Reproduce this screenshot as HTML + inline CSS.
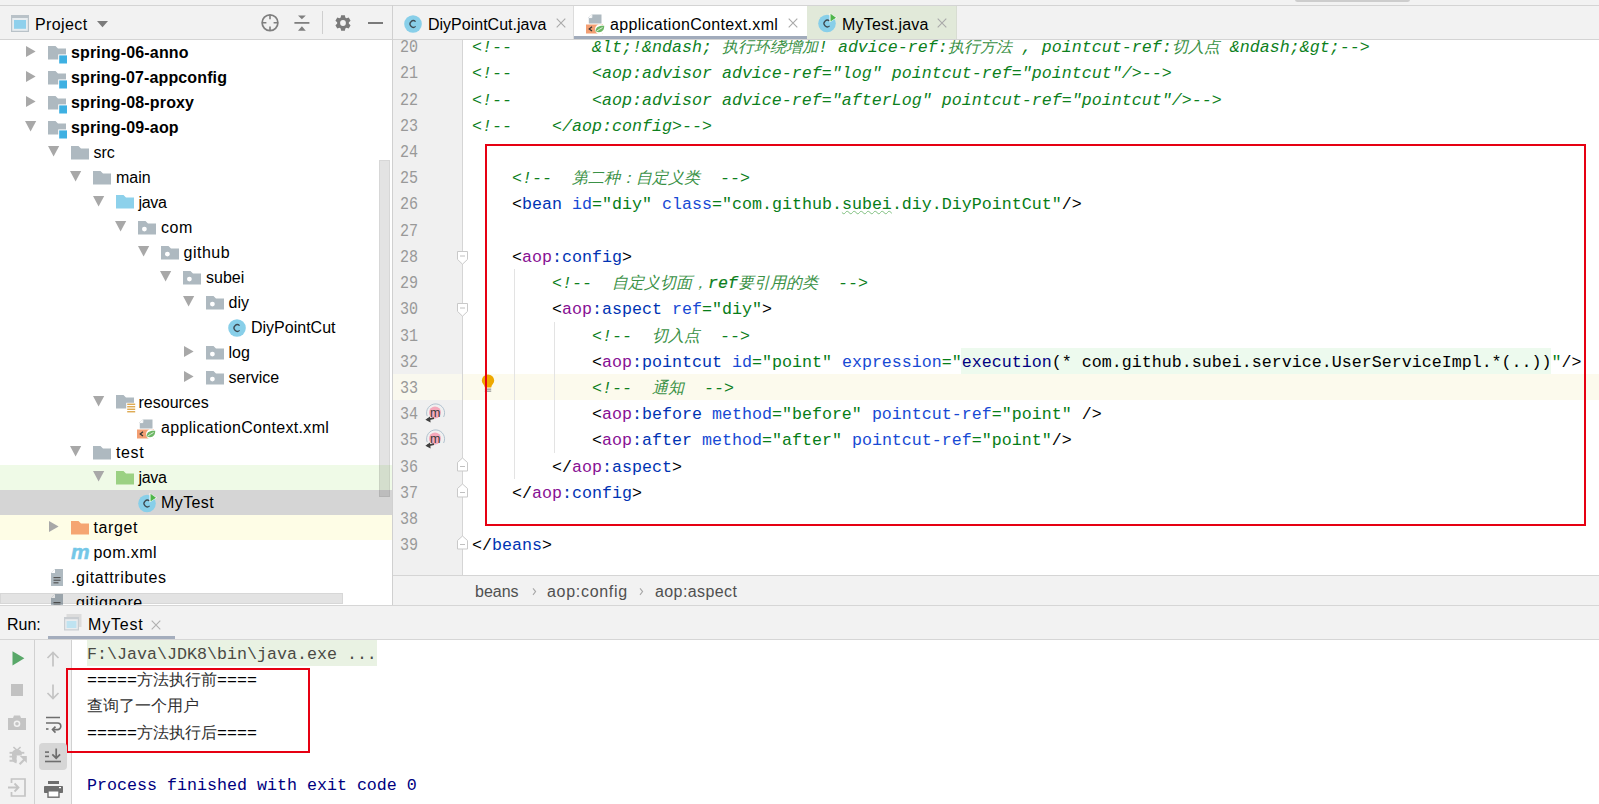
<!DOCTYPE html><html><head><meta charset="utf-8"><style>
*{margin:0;padding:0;box-sizing:border-box}
html,body{width:1599px;height:804px;overflow:hidden;background:#f2f2f2;font-family:"Liberation Sans",sans-serif;}
.a{position:absolute}
.ui{font-family:"Liberation Sans",sans-serif;font-size:16px;color:#000;white-space:pre;line-height:22px}
.code{font-family:"Liberation Mono",monospace;font-size:16.67px;white-space:pre;line-height:26.23px;height:26.23px}
.cj{font-size:16px}
.cm{color:#0d7f1d;font-style:italic}
.con .cj{color:#303030}
.cm .cj{font-weight:300;color:#3a9146}
.tg{color:#0033b3}
.ns{color:#871094}
.at{color:#174ad4}
.vl{color:#067d17}
.ln{font-family:"Liberation Mono",monospace;font-size:17.5px;color:#999;white-space:pre;line-height:26.23px;transform:scaleX(0.86);transform-origin:0 0}
</style></head><body>
<div class="a" style="left:0;top:0;width:1599px;height:5px;background:#f2f2f2"></div>
<div class="a" style="left:1295px;top:-3px;width:115px;height:4.5px;background:#cdcdcd;border-radius:3px"></div>
<div class="a" style="left:0;top:5px;width:1599px;height:1px;background:#d4d4d4"></div>
<div class="a" style="left:0;top:6px;width:392px;height:33px;background:#f2f2f2"></div>
<div class="a" style="left:0;top:39px;width:392px;height:1px;background:#d4d4d4"></div>
<svg class="a" style="left:11px;top:15px" width="18" height="17" viewBox="0 0 18 17"><rect x="0" y="0" width="18" height="17" fill="#b9c2c8"/><rect x="1.2" y="3" width="15.6" height="12.8" fill="#e8edf0"/><rect x="3" y="5" width="12" height="8.8" fill="#8fd0ec"/></svg>
<div class="a ui" style="left:35px;top:14px;color:#000;letter-spacing:0.4px">Project</div>
<svg class="a" style="left:97px;top:21px" width="12" height="7" viewBox="0 0 12 7"><path d="M0 0H11L5.5 6.2Z" fill="#7b7b7b"/></svg>
<svg class="a" style="left:260px;top:13px" width="20" height="20" viewBox="0 0 20 20"><circle cx="10" cy="9.8" r="7.9" fill="none" stroke="#7f7f7f" stroke-width="1.7"/><path d="M10 2V6.2M10 13.4V17.6M2.2 9.8H6.4M13.6 9.8H17.8" stroke="#7f7f7f" stroke-width="1.6"/></svg>
<svg class="a" style="left:293px;top:14px" width="18" height="18" viewBox="0 0 18 18"><path d="M5 1.4H12.8L8.9 5.3Z" fill="#7f7f7f"/><path d="M1.4 8.9H16.4" stroke="#7f7f7f" stroke-width="1.8"/><path d="M5 16.7H12.8L8.9 12.3Z" fill="#7f7f7f"/></svg>
<div class="a" style="left:322px;top:11px;width:1px;height:23px;background:#cfcfcf"></div>
<svg class="a" style="left:332.9px;top:12.9px" width="20" height="20" viewBox="0 0 20 20"><path d="M7.70 4.57 L8.12 2.33 L11.88 2.33 L12.30 4.57 L13.56 5.29 L15.71 4.54 L17.58 7.79 L15.85 9.27 L15.85 10.73 L17.58 12.21 L15.71 15.46 L13.56 14.71 L12.30 15.43 L11.88 17.67 L8.12 17.67 L7.70 15.43 L6.44 14.71 L4.29 15.46 L2.42 12.21 L4.15 10.73 L4.15 9.27 L2.42 7.79 L4.29 4.54 L6.44 5.29Z" fill="#7a7a7a"/><circle cx="10" cy="10" r="2.9" fill="#f2f2f2"/></svg>
<div class="a" style="left:368px;top:22px;width:15px;height:2px;background:#7a7a7a"></div>
<div class="a" style="left:0;top:40px;width:392px;height:565px;background:#fff;overflow:hidden">
<div class="a" style="left:0;top:425px;width:392px;height:25px;background:#effae7"></div>
<div class="a" style="left:0;top:450px;width:392px;height:25px;background:#d5d5d5"></div>
<div class="a" style="left:0;top:475px;width:392px;height:25px;background:#fefde6"></div>
<div class="a" style="left:26.0px;top:6.1px;line-height:0"><svg width="10" height="11" viewBox="0 0 10 11"><path d="M0 0L9.6 5.5L0 11Z" fill="#a8a8a8"/></svg></div>
<div class="a" style="left:48.0px;top:5.5px;line-height:0"><svg width="21" height="19" viewBox="0 0 21 19"><path d="M0 0H7.5L10 2.5H18V13.5H0Z" fill="#aeb9c0"/><rect x="10.2" y="8.4" width="9.8" height="10.1" fill="#fff"/><rect x="11.2" y="9.4" width="7.8" height="8.1" fill="#3eb0e2"/></svg></div>
<div class="a ui" style="left:71.0px;top:2.4px;font-weight:700;letter-spacing:0.15px;">spring-06-anno</div>
<div class="a" style="left:26.0px;top:31.1px;line-height:0"><svg width="10" height="11" viewBox="0 0 10 11"><path d="M0 0L9.6 5.5L0 11Z" fill="#a8a8a8"/></svg></div>
<div class="a" style="left:48.0px;top:30.5px;line-height:0"><svg width="21" height="19" viewBox="0 0 21 19"><path d="M0 0H7.5L10 2.5H18V13.5H0Z" fill="#aeb9c0"/><rect x="10.2" y="8.4" width="9.8" height="10.1" fill="#fff"/><rect x="11.2" y="9.4" width="7.8" height="8.1" fill="#3eb0e2"/></svg></div>
<div class="a ui" style="left:71.0px;top:27.4px;font-weight:700;letter-spacing:0.12px;">spring-07-appconfig</div>
<div class="a" style="left:26.0px;top:56.1px;line-height:0"><svg width="10" height="11" viewBox="0 0 10 11"><path d="M0 0L9.6 5.5L0 11Z" fill="#a8a8a8"/></svg></div>
<div class="a" style="left:48.0px;top:55.5px;line-height:0"><svg width="21" height="19" viewBox="0 0 21 19"><path d="M0 0H7.5L10 2.5H18V13.5H0Z" fill="#aeb9c0"/><rect x="10.2" y="8.4" width="9.8" height="10.1" fill="#fff"/><rect x="11.2" y="9.4" width="7.8" height="8.1" fill="#3eb0e2"/></svg></div>
<div class="a ui" style="left:71.0px;top:52.4px;font-weight:700;letter-spacing:0.15px;">spring-08-proxy</div>
<div class="a" style="left:25.0px;top:80.9px;line-height:0"><svg width="12" height="11" viewBox="0 0 12 11"><path d="M0 0H11.2L5.6 10.6Z" fill="#a8a8a8"/></svg></div>
<div class="a" style="left:48.0px;top:80.5px;line-height:0"><svg width="21" height="19" viewBox="0 0 21 19"><path d="M0 0H7.5L10 2.5H18V13.5H0Z" fill="#aeb9c0"/><rect x="10.2" y="8.4" width="9.8" height="10.1" fill="#fff"/><rect x="11.2" y="9.4" width="7.8" height="8.1" fill="#3eb0e2"/></svg></div>
<div class="a ui" style="left:71.0px;top:77.4px;font-weight:700;letter-spacing:0.15px;">spring-09-aop</div>
<div class="a" style="left:47.5px;top:105.9px;line-height:0"><svg width="12" height="11" viewBox="0 0 12 11"><path d="M0 0H11.2L5.6 10.6Z" fill="#a8a8a8"/></svg></div>
<div class="a" style="left:70.5px;top:105.5px;line-height:0"><svg width="19" height="14" viewBox="0 0 19 14"><path d="M0 0H7.5L10 2.5H18V13.5H0Z" fill="#aeb9c0"/></svg></div>
<div class="a ui" style="left:93.5px;top:102.4px;">src</div>
<div class="a" style="left:70.0px;top:130.9px;line-height:0"><svg width="12" height="11" viewBox="0 0 12 11"><path d="M0 0H11.2L5.6 10.6Z" fill="#a8a8a8"/></svg></div>
<div class="a" style="left:93.0px;top:130.5px;line-height:0"><svg width="19" height="14" viewBox="0 0 19 14"><path d="M0 0H7.5L10 2.5H18V13.5H0Z" fill="#aeb9c0"/></svg></div>
<div class="a ui" style="left:116.0px;top:127.4px;">main</div>
<div class="a" style="left:92.5px;top:155.9px;line-height:0"><svg width="12" height="11" viewBox="0 0 12 11"><path d="M0 0H11.2L5.6 10.6Z" fill="#a8a8a8"/></svg></div>
<div class="a" style="left:115.5px;top:155.3px;line-height:0"><svg width="19" height="14" viewBox="0 0 19 14"><path d="M0 0H7.5L10 2.5H18V13.5H0Z" fill="#8dd1eb"/></svg></div>
<div class="a ui" style="left:138.5px;top:152.4px;letter-spacing:-0.35px;">java</div>
<div class="a" style="left:115.0px;top:180.9px;line-height:0"><svg width="12" height="11" viewBox="0 0 12 11"><path d="M0 0H11.2L5.6 10.6Z" fill="#a8a8a8"/></svg></div>
<div class="a" style="left:138.0px;top:180.5px;line-height:0"><svg width="19" height="14" viewBox="0 0 19 14"><path d="M0 0H7.5L10 2.5H18V13.5H0Z" fill="#aeb9c0"/><circle cx="6.4" cy="8.1" r="2.4" fill="#fff"/></svg></div>
<div class="a ui" style="left:161.0px;top:177.4px;letter-spacing:0.6px;">com</div>
<div class="a" style="left:137.5px;top:205.9px;line-height:0"><svg width="12" height="11" viewBox="0 0 12 11"><path d="M0 0H11.2L5.6 10.6Z" fill="#a8a8a8"/></svg></div>
<div class="a" style="left:160.5px;top:205.5px;line-height:0"><svg width="19" height="14" viewBox="0 0 19 14"><path d="M0 0H7.5L10 2.5H18V13.5H0Z" fill="#aeb9c0"/><circle cx="6.4" cy="8.1" r="2.4" fill="#fff"/></svg></div>
<div class="a ui" style="left:183.5px;top:202.4px;letter-spacing:0.5px;">github</div>
<div class="a" style="left:160.0px;top:230.9px;line-height:0"><svg width="12" height="11" viewBox="0 0 12 11"><path d="M0 0H11.2L5.6 10.6Z" fill="#a8a8a8"/></svg></div>
<div class="a" style="left:183.0px;top:230.5px;line-height:0"><svg width="19" height="14" viewBox="0 0 19 14"><path d="M0 0H7.5L10 2.5H18V13.5H0Z" fill="#aeb9c0"/><circle cx="6.4" cy="8.1" r="2.4" fill="#fff"/></svg></div>
<div class="a ui" style="left:206.0px;top:227.4px;">subei</div>
<div class="a" style="left:182.5px;top:255.9px;line-height:0"><svg width="12" height="11" viewBox="0 0 12 11"><path d="M0 0H11.2L5.6 10.6Z" fill="#a8a8a8"/></svg></div>
<div class="a" style="left:205.5px;top:255.5px;line-height:0"><svg width="19" height="14" viewBox="0 0 19 14"><path d="M0 0H7.5L10 2.5H18V13.5H0Z" fill="#aeb9c0"/><circle cx="6.4" cy="8.1" r="2.4" fill="#fff"/></svg></div>
<div class="a ui" style="left:228.5px;top:252.4px;">diy</div>
<div class="a" style="left:228.0px;top:279.0px;line-height:0"><svg width="19" height="19" viewBox="0 0 19 19"><circle cx="9" cy="9" r="8.8" fill="#88cfe9"/><path d="M11.6 6.6A3.3 3.3 0 1 0 11.6 11.4" fill="none" stroke="#3d4a52" stroke-width="1.25"/></svg></div>
<div class="a ui" style="left:251.0px;top:277.4px;">DiyPointCut</div>
<div class="a" style="left:183.5px;top:306.1px;line-height:0"><svg width="10" height="11" viewBox="0 0 10 11"><path d="M0 0L9.6 5.5L0 11Z" fill="#a8a8a8"/></svg></div>
<div class="a" style="left:205.5px;top:305.5px;line-height:0"><svg width="19" height="14" viewBox="0 0 19 14"><path d="M0 0H7.5L10 2.5H18V13.5H0Z" fill="#aeb9c0"/><circle cx="6.4" cy="8.1" r="2.4" fill="#fff"/></svg></div>
<div class="a ui" style="left:228.5px;top:302.4px;">log</div>
<div class="a" style="left:183.5px;top:331.1px;line-height:0"><svg width="10" height="11" viewBox="0 0 10 11"><path d="M0 0L9.6 5.5L0 11Z" fill="#a8a8a8"/></svg></div>
<div class="a" style="left:205.5px;top:330.5px;line-height:0"><svg width="19" height="14" viewBox="0 0 19 14"><path d="M0 0H7.5L10 2.5H18V13.5H0Z" fill="#aeb9c0"/><circle cx="6.4" cy="8.1" r="2.4" fill="#fff"/></svg></div>
<div class="a ui" style="left:228.5px;top:327.4px;">service</div>
<div class="a" style="left:92.5px;top:355.9px;line-height:0"><svg width="12" height="11" viewBox="0 0 12 11"><path d="M0 0H11.2L5.6 10.6Z" fill="#a8a8a8"/></svg></div>
<div class="a" style="left:115.5px;top:355.3px;line-height:0"><svg width="21" height="19" viewBox="0 0 21 19"><path d="M0 0H7.5L10 2.5H18V13.5H0Z" fill="#aeb9c0"/><rect x="10.2" y="7.8" width="9.6" height="10.6" fill="#fff"/><g fill="#dba243"><rect x="11.2" y="8.6" width="8" height="1.3"/><rect x="11.2" y="11.1" width="8" height="1.3"/><rect x="11.2" y="13.6" width="8" height="1.3"/><rect x="11.2" y="16.1" width="8" height="1.3"/></g></svg></div>
<div class="a ui" style="left:138.5px;top:352.4px;">resources</div>
<div class="a" style="left:136.5px;top:378.9px;line-height:0"><svg width="19" height="20" viewBox="0 0 19 20"><path d="M5.5 0.5H15.5V9.5H2.8V3.2Z" fill="#aeb9c0"/><path d="M2.8 3.2L5.5 0.5V3.2Z" fill="#fff"/><path d="M2.8 3.6H5.8V0.5" fill="none" stroke="#fff" stroke-width="1"/><rect x="0" y="10.5" width="17" height="9" fill="#f39f73"/><path d="M6 12.8L3.2 14.9L6 17" fill="none" stroke="#333" stroke-width="1.2"/><circle cx="14" cy="15.3" r="5" fill="#fff"/><path d="M9.6 17.6C9.2 13.5 12.6 11.2 18.2 11.8C18.4 16.4 15.6 19.6 9.6 17.6Z" fill="#6db765"/><path d="M10.5 17.3C12.5 15.8 14.5 14.6 16.5 13.5" stroke="#fff" stroke-width="0.8" fill="none"/></svg></div>
<div class="a ui" style="left:161.0px;top:377.4px;letter-spacing:0.33px;">applicationContext.xml</div>
<div class="a" style="left:70.0px;top:405.9px;line-height:0"><svg width="12" height="11" viewBox="0 0 12 11"><path d="M0 0H11.2L5.6 10.6Z" fill="#a8a8a8"/></svg></div>
<div class="a" style="left:93.0px;top:405.5px;line-height:0"><svg width="19" height="14" viewBox="0 0 19 14"><path d="M0 0H7.5L10 2.5H18V13.5H0Z" fill="#aeb9c0"/></svg></div>
<div class="a ui" style="left:116.0px;top:402.4px;letter-spacing:0.6px;">test</div>
<div class="a" style="left:92.5px;top:430.9px;line-height:0"><svg width="12" height="11" viewBox="0 0 12 11"><path d="M0 0H11.2L5.6 10.6Z" fill="#a8a8a8"/></svg></div>
<div class="a" style="left:115.5px;top:430.5px;line-height:0"><svg width="19" height="14" viewBox="0 0 19 14"><path d="M0 0H7.5L10 2.5H18V13.5H0Z" fill="#9bd183"/></svg></div>
<div class="a ui" style="left:138.5px;top:427.4px;letter-spacing:-0.35px;">java</div>
<div class="a" style="left:138.0px;top:452.5px;line-height:0"><svg width="20" height="20" viewBox="0 0 20 20"><circle cx="9" cy="10.5" r="8.8" fill="#88cfe9"/><path d="M11.6 8.1A3.3 3.3 0 1 0 11.6 12.9" fill="none" stroke="#3d4a52" stroke-width="1.25"/><path d="M11.5 0L19 4.8L11.5 9.6Z" fill="#fff"/><path d="M12.5 0.8L18 4.8L12.5 8.6Z" fill="#4fb54a"/></svg></div>
<div class="a ui" style="left:161.0px;top:452.4px;letter-spacing:0.4px;">MyTest</div>
<div class="a" style="left:48.5px;top:481.1px;line-height:0"><svg width="10" height="11" viewBox="0 0 10 11"><path d="M0 0L9.6 5.5L0 11Z" fill="#a8a8a8"/></svg></div>
<div class="a" style="left:70.5px;top:480.8px;line-height:0"><svg width="19" height="14" viewBox="0 0 19 14"><path d="M0 0H7.5L10 2.5H18V13.5H0Z" fill="#f5a572"/></svg></div>
<div class="a ui" style="left:93.5px;top:477.4px;letter-spacing:0.6px;">target</div>
<div class="a" style="left:70.8px;top:505.8px;line-height:0"><svg width="19" height="15" viewBox="0 0 19 15"><text x="0" y="12.6" font-family="Liberation Sans" font-weight="700" font-style="italic" font-size="20" fill="#74c7e7" stroke="#74c7e7" stroke-width="0.5" textLength="18.6" lengthAdjust="spacingAndGlyphs">m</text></svg></div>
<div class="a ui" style="left:93.5px;top:502.4px;letter-spacing:0.45px;">pom.xml</div>
<div class="a" style="left:51.0px;top:529.3px;line-height:0"><svg width="13" height="18" viewBox="0 0 13 18"><path d="M4 0H12V17H0V4Z" fill="#aeb9c0"/><path d="M0 4L4 0V4Z" fill="#fff"/><g fill="#555"><rect x="2.5" y="8" width="7" height="1.2"/><rect x="2.5" y="10.6" width="7" height="1.2"/><rect x="2.5" y="13.2" width="5" height="1.2"/></g></svg></div>
<div class="a ui" style="left:71.0px;top:527.4px;letter-spacing:0.6px;">.gitattributes</div>
<div class="a" style="left:51.0px;top:554.3px;line-height:0"><svg width="13" height="18" viewBox="0 0 13 18"><path d="M4 0H12V17H0V4Z" fill="#aeb9c0"/><path d="M0 4L4 0V4Z" fill="#fff"/><g fill="#555"><rect x="2.5" y="8" width="7" height="1.2"/><rect x="2.5" y="10.6" width="7" height="1.2"/><rect x="2.5" y="13.2" width="5" height="1.2"/></g></svg></div>
<div class="a ui" style="left:71.0px;top:552.4px;letter-spacing:0.6px;">.gitignore</div>
<div class="a" style="left:379px;top:120px;width:11px;height:337px;background:rgba(0,0,0,0.11);border:1px solid rgba(0,0,0,0.05)"></div>
<div class="a" style="left:0;top:553px;width:343px;height:11px;background:rgba(0,0,0,0.11);border:1px solid rgba(0,0,0,0.05)"></div>
</div>
<div class="a" style="left:392px;top:5px;width:1px;height:600px;background:#d0d0d0"></div>
<div class="a" style="left:393px;top:6px;width:1206px;height:33px;background:#f2f2f2"></div>
<div class="a" style="left:393px;top:39px;width:1206px;height:1px;background:#d4d4d4"></div>
<div class="a" style="left:574px;top:6px;width:233px;height:33px;background:#fff"></div>
<div class="a" style="left:574px;top:36px;width:233px;height:3px;background:#a1abbb"></div>
<div class="a" style="left:807px;top:6px;width:150px;height:33px;background:#e1e9d9;border-right:1px solid #d8ddd2"></div>
<div class="a" style="left:573px;top:6px;width:1px;height:33px;background:#dcdcdc"></div>
<div class="a" style="left:404px;top:15px;line-height:0"><svg width="19" height="19" viewBox="0 0 19 19"><circle cx="9" cy="9" r="8.8" fill="#88cfe9"/><path d="M11.6 6.6A3.3 3.3 0 1 0 11.6 11.4" fill="none" stroke="#3d4a52" stroke-width="1.25"/></svg></div>
<div class="a ui" style="left:428px;top:14px">DiyPointCut.java</div>
<svg class="a" style="left:555.5px;top:18px" width="10" height="10" viewBox="0 0 10 10"><path d="M0.7 0.7L9.3 9.3M9.3 0.7L0.7 9.3" stroke="#a9a9a9" stroke-width="1.1"/></svg>
<div class="a" style="left:586px;top:14px;line-height:0"><svg width="19" height="20" viewBox="0 0 19 20"><path d="M5.5 0.5H15.5V9.5H2.8V3.2Z" fill="#aeb9c0"/><path d="M2.8 3.2L5.5 0.5V3.2Z" fill="#fff"/><path d="M2.8 3.6H5.8V0.5" fill="none" stroke="#fff" stroke-width="1"/><rect x="0" y="10.5" width="17" height="9" fill="#f39f73"/><path d="M6 12.8L3.2 14.9L6 17" fill="none" stroke="#333" stroke-width="1.2"/><circle cx="14" cy="15.3" r="5" fill="#fff"/><path d="M9.6 17.6C9.2 13.5 12.6 11.2 18.2 11.8C18.4 16.4 15.6 19.6 9.6 17.6Z" fill="#6db765"/><path d="M10.5 17.3C12.5 15.8 14.5 14.6 16.5 13.5" stroke="#fff" stroke-width="0.8" fill="none"/></svg></div>
<div class="a ui" style="left:610px;top:14px;letter-spacing:0.33px">applicationContext.xml</div>
<svg class="a" style="left:787.5px;top:18px" width="10" height="10" viewBox="0 0 10 10"><path d="M0.7 0.7L9.3 9.3M9.3 0.7L0.7 9.3" stroke="#a9a9a9" stroke-width="1.1"/></svg>
<div class="a" style="left:818px;top:13px;line-height:0"><svg width="20" height="20" viewBox="0 0 20 20"><circle cx="9" cy="10.5" r="8.8" fill="#88cfe9"/><path d="M11.6 8.1A3.3 3.3 0 1 0 11.6 12.9" fill="none" stroke="#3d4a52" stroke-width="1.25"/><path d="M11.5 0L19 4.8L11.5 9.6Z" fill="#fff"/><path d="M12.5 0.8L18 4.8L12.5 8.6Z" fill="#4fb54a"/></svg></div>
<div class="a ui" style="left:842px;top:14px;letter-spacing:0.2px">MyTest.java</div>
<svg class="a" style="left:936.5px;top:18px" width="10" height="10" viewBox="0 0 10 10"><path d="M0.7 0.7L9.3 9.3M9.3 0.7L0.7 9.3" stroke="#a9a9a9" stroke-width="1.1"/></svg>
<div class="a" style="left:393px;top:40px;width:1206px;height:535px;background:#fff;overflow:hidden">
<div class="a" style="left:0;top:0;width:69px;height:535px;background:#f0f0f0"></div>
<div class="a" style="left:69px;top:0;width:1px;height:535px;background:#d5d5d5"></div>
<div class="a" style="left:0;top:334.03px;width:69px;height:26.23px;background:#f9f8ee"></div>
<div class="a" style="left:70px;top:334.03px;width:1136px;height:26.23px;background:#fcfaed"></div>
<div class="a" style="left:568px;top:307.80px;width:590px;height:26.23px;background:#edfaee"></div>
<div class="a" style="left:121px;top:229.11px;width:1px;height:209.84px;background:#e3e3e3"></div>
<div class="a" style="left:161px;top:281.57px;width:1px;height:131.15px;background:#e3e3e3"></div>
<div class="a ln" style="left:7px;top:-5.96px">20</div>
<div class="a code" style="left:79px;top:-4.96px"><span class="cm">&lt;!--        &amp;lt;!&amp;ndash; <span class="cj">执</span><span class="cj">行</span><span class="cj">环</span><span class="cj">绕</span><span class="cj">增</span><span class="cj">加</span>! advice-ref:<span class="cj">执</span><span class="cj">行</span><span class="cj">方</span><span class="cj">法</span> , pointcut-ref:<span class="cj">切</span><span class="cj">入</span><span class="cj">点</span> &amp;ndash;&amp;gt;--&gt;</span></div>
<div class="a ln" style="left:7px;top:20.27px">21</div>
<div class="a code" style="left:79px;top:21.27px"><span class="cm">&lt;!--        &lt;aop:advisor advice-ref=&quot;log&quot; pointcut-ref=&quot;pointcut&quot;/&gt;--&gt;</span></div>
<div class="a ln" style="left:7px;top:46.50px">22</div>
<div class="a code" style="left:79px;top:47.50px"><span class="cm">&lt;!--        &lt;aop:advisor advice-ref=&quot;afterLog&quot; pointcut-ref=&quot;pointcut&quot;/&gt;--&gt;</span></div>
<div class="a ln" style="left:7px;top:72.73px">23</div>
<div class="a code" style="left:79px;top:73.73px"><span class="cm">&lt;!--    &lt;/aop:config&gt;--&gt;</span></div>
<div class="a ln" style="left:7px;top:98.96px">24</div>
<div class="a code" style="left:79px;top:99.96px"></div>
<div class="a ln" style="left:7px;top:125.19px">25</div>
<div class="a code" style="left:79px;top:126.19px">    <span class="cm">&lt;!--  <span class="cj">第</span><span class="cj">二</span><span class="cj">种</span><span class="cj">：</span><span class="cj">自</span><span class="cj">定</span><span class="cj">义</span><span class="cj">类</span>  --&gt;</span></div>
<div class="a ln" style="left:7px;top:151.42px">26</div>
<div class="a code" style="left:79px;top:152.42px">    &lt;<span class="tg">bean</span> <span class="at">id</span><span class="vl">=&quot;diy&quot;</span> <span class="at">class</span><span class="vl">=&quot;com.github.</span><span class="vl" style="text-decoration:underline wavy #7fbf7f;text-decoration-thickness:1px;text-underline-offset:1px">subei</span><span class="vl">.diy.DiyPointCut&quot;</span>/&gt;</div>
<div class="a ln" style="left:7px;top:177.65px">27</div>
<div class="a code" style="left:79px;top:178.65px"></div>
<div class="a ln" style="left:7px;top:203.88px">28</div>
<div class="a code" style="left:79px;top:204.88px">    &lt;<span class="ns">aop</span><span class="tg">:config</span>&gt;</div>
<div class="a ln" style="left:7px;top:230.11px">29</div>
<div class="a code" style="left:79px;top:231.11px">        <span class="cm">&lt;!--  <span class="cj">自</span><span class="cj">定</span><span class="cj">义</span><span class="cj">切</span><span class="cj">面</span><span class="cj">，</span></span><span class="cm" style="-webkit-text-stroke:0.2px #0d7f1d">ref</span><span class="cm"><span class="cj">要</span><span class="cj">引</span><span class="cj">用</span><span class="cj">的</span><span class="cj">类</span>  --&gt;</span></div>
<div class="a ln" style="left:7px;top:256.34px">30</div>
<div class="a code" style="left:79px;top:257.34px">        &lt;<span class="ns">aop</span><span class="tg">:aspect</span> <span class="at">ref</span><span class="vl">=&quot;diy&quot;</span>&gt;</div>
<div class="a ln" style="left:7px;top:282.57px">31</div>
<div class="a code" style="left:79px;top:283.57px">            <span class="cm">&lt;!--  <span class="cj">切</span><span class="cj">入</span><span class="cj">点</span>  --&gt;</span></div>
<div class="a ln" style="left:7px;top:308.80px">32</div>
<div class="a code" style="left:79px;top:309.80px">            &lt;<span class="ns">aop</span><span class="tg">:pointcut</span> <span class="at">id</span><span class="vl">=&quot;point&quot;</span> <span class="at">expression</span><span class="vl">=&quot;</span><span style="color:#000080">execution</span>(* com.github.subei.service.UserServiceImpl.*(..))<span class="vl">&quot;</span>/&gt;</div>
<div class="a ln" style="left:7px;top:335.03px">33</div>
<div class="a code" style="left:79px;top:336.03px">            <span class="cm">&lt;!--  <span class="cj">通</span><span class="cj">知</span>  --&gt;</span></div>
<div class="a ln" style="left:7px;top:361.26px">34</div>
<div class="a code" style="left:79px;top:362.26px">            &lt;<span class="ns">aop</span><span class="tg">:before</span> <span class="at">method</span><span class="vl">=&quot;before&quot;</span> <span class="at">pointcut-ref</span><span class="vl">=&quot;point&quot;</span> /&gt;</div>
<div class="a ln" style="left:7px;top:387.49px">35</div>
<div class="a code" style="left:79px;top:388.49px">            &lt;<span class="ns">aop</span><span class="tg">:after</span> <span class="at">method</span><span class="vl">=&quot;after&quot;</span> <span class="at">pointcut-ref</span><span class="vl">=&quot;point&quot;</span>/&gt;</div>
<div class="a ln" style="left:7px;top:413.72px">36</div>
<div class="a code" style="left:79px;top:414.72px">        &lt;/<span class="ns">aop</span><span class="tg">:aspect</span>&gt;</div>
<div class="a ln" style="left:7px;top:439.95px">37</div>
<div class="a code" style="left:79px;top:440.95px">    &lt;/<span class="ns">aop</span><span class="tg">:config</span>&gt;</div>
<div class="a ln" style="left:7px;top:466.18px">38</div>
<div class="a code" style="left:79px;top:467.18px"></div>
<div class="a ln" style="left:7px;top:492.41px">39</div>
<div class="a code" style="left:79px;top:493.41px">&lt;/<span class="tg">beans</span>&gt;</div>
<div class="a" style="left:69px;top:0;width:1px;height:535px;background:#d5d5d5"></div>
<svg class="a" style="left:63.5px;top:210.78px" width="12" height="15" viewBox="0 0 12 15"><path d="M0.5 0.5H10.5V8.4L5.5 13.2L0.5 8.4Z" fill="#fff" stroke="#c9c9c9"/><path d="M3 5H8" stroke="#c0c0c0"/></svg>
<svg class="a" style="left:63.5px;top:263.24px" width="12" height="15" viewBox="0 0 12 15"><path d="M0.5 0.5H10.5V8.4L5.5 13.2L0.5 8.4Z" fill="#fff" stroke="#c9c9c9"/><path d="M3 5H8" stroke="#c0c0c0"/></svg>
<svg class="a" style="left:63.5px;top:416.72px" width="12" height="15" viewBox="0 0 12 15"><path d="M0.5 14H10.5V5.5L5.5 1L0.5 5.5Z" fill="#fff" stroke="#c9c9c9"/><path d="M3 9.5H8" stroke="#c0c0c0"/></svg>
<svg class="a" style="left:63.5px;top:442.95px" width="12" height="15" viewBox="0 0 12 15"><path d="M0.5 14H10.5V5.5L5.5 1L0.5 5.5Z" fill="#fff" stroke="#c9c9c9"/><path d="M3 9.5H8" stroke="#c0c0c0"/></svg>
<svg class="a" style="left:63.5px;top:495.41px" width="12" height="15" viewBox="0 0 12 15"><path d="M0.5 14H10.5V5.5L5.5 1L0.5 5.5Z" fill="#fff" stroke="#c9c9c9"/><path d="M3 9.5H8" stroke="#c0c0c0"/></svg>
<svg class="a" style="left:88px;top:334.03px" width="14" height="20" viewBox="0 0 14 20"><path d="M0.8 6.6A6.2 6.2 0 1 1 13.2 6.6C13.2 9.6 10.6 10.8 10.2 13.4H3.8C3.4 10.8 0.8 9.6 0.8 6.6Z" fill="#eea800"/><rect x="3.8" y="14.6" width="6.4" height="1.1" fill="#8a8a8a"/><rect x="3.8" y="16.6" width="6.4" height="1.1" fill="#8a8a8a"/></svg>
<svg class="a" style="left:32px;top:363.26px" width="21" height="20" viewBox="0 0 21 20"><path d="M2.2 13.2A9 9 0 1 1 18.6 14" fill="none" stroke="#a9bccb" stroke-width="0.9"/><circle cx="10" cy="9.6" r="6" fill="#f5a9bb"/><text x="10.2" y="13.6" font-family="Liberation Sans" font-size="12.5" text-anchor="middle" fill="#3a3a3a">m</text><path d="M9 15.2L2.2 16.6" stroke="#3f3f3f" stroke-width="1.8" fill="none"/><path d="M0.4 16.8L5 13.4L5.6 19.4Z" fill="#3f3f3f"/></svg>
<svg class="a" style="left:32px;top:389.49px" width="21" height="20" viewBox="0 0 21 20"><path d="M2.2 13.2A9 9 0 1 1 18.6 14" fill="none" stroke="#a9bccb" stroke-width="0.9"/><circle cx="10" cy="9.6" r="6" fill="#f5a9bb"/><text x="10.2" y="13.6" font-family="Liberation Sans" font-size="12.5" text-anchor="middle" fill="#3a3a3a">m</text><path d="M9 15.2L2.2 16.6" stroke="#3f3f3f" stroke-width="1.8" fill="none"/><path d="M0.4 16.8L5 13.4L5.6 19.4Z" fill="#3f3f3f"/></svg>
</div>
<div class="a" style="left:485px;top:144px;width:1101px;height:382px;border:2px solid #e60012"></div>
<div class="a" style="left:393px;top:575px;width:1206px;height:30px;background:#f2f2f2;border-top:1px solid #d5d5d5"></div>
<div class="a ui" style="left:475px;top:581px;color:#505050">beans</div>
<div class="a ui" style="left:547px;top:581px;color:#505050;letter-spacing:0.7px">aop:config</div>
<div class="a ui" style="left:655px;top:581px;color:#505050;letter-spacing:0.4px">aop:aspect</div>
<svg class="a" style="left:531.5px;top:587px" width="6" height="10" viewBox="0 0 6 10"><path d="M1 1.3L3.6 4.6L1 7.9" fill="none" stroke="#a8a8a8" stroke-width="1.1"/></svg>
<svg class="a" style="left:639px;top:587px" width="6" height="10" viewBox="0 0 6 10"><path d="M1 1.3L3.6 4.6L1 7.9" fill="none" stroke="#a8a8a8" stroke-width="1.1"/></svg>
<div class="a" style="left:0;top:605px;width:1599px;height:35px;background:#f2f2f2;border-top:1px solid #d6d6d6"></div>
<div class="a ui" style="left:7px;top:614px">Run:</div>
<svg class="a" style="left:64px;top:614px" width="18" height="17" viewBox="0 0 18 17"><rect x="2.5" y="0" width="15" height="13" fill="#dcdcdc"/><rect x="0" y="3" width="15" height="13.5" fill="#c9cdd1"/><rect x="1.2" y="5.2" width="12.6" height="10.1" fill="#e9ecee"/><rect x="2.6" y="7" width="9.8" height="7" fill="#bfe3f1"/></svg>
<div class="a ui" style="left:88px;top:614px;letter-spacing:0.8px">MyTest</div>
<svg class="a" style="left:151px;top:619.5px" width="10" height="10" viewBox="0 0 10 10"><path d="M0.7 0.7L9.3 9.3M9.3 0.7L0.7 9.3" stroke="#b0b0b0" stroke-width="1.1"/></svg>
<div class="a" style="left:48px;top:636px;width:127px;height:4px;background:#a4adbd"></div>
<div class="a" style="left:0;top:639px;width:1599px;height:1px;background:#d6d6d6"></div>
<div class="a" style="left:0;top:640px;width:35px;height:164px;background:#f2f2f2;border-right:1px solid #d1d1d1"></div>
<div class="a" style="left:35px;top:640px;width:37px;height:164px;background:#f2f2f2;border-right:1px solid #d1d1d1"></div>
<div class="a" style="left:72px;top:640px;width:1527px;height:164px;background:#fff"></div>
<div class="a" style="left:87px;top:640px;width:290px;height:25.7px;background:#e9f2e3"></div>
<div class="a code con" style="left:87px;top:642.00px;color:#000"><span style="color:#4a4a44">F:\Java\JDK8\bin\java.exe ...</span></div>
<div class="a code con" style="left:87px;top:668.23px;color:#000">=====<span class="cj">方</span><span class="cj">法</span><span class="cj">执</span><span class="cj">行</span><span class="cj">前</span>====</div>
<div class="a code con" style="left:87px;top:694.46px;color:#000"><span class="cj">查</span><span class="cj">询</span><span class="cj">了</span><span class="cj">一</span><span class="cj">个</span><span class="cj">用</span><span class="cj">户</span></div>
<div class="a code con" style="left:87px;top:720.69px;color:#000">=====<span class="cj">方</span><span class="cj">法</span><span class="cj">执</span><span class="cj">行</span><span class="cj">后</span>====</div>
<div class="a code con" style="left:87px;top:773.15px;color:#000"><span style="color:#00007f">Process finished with exit code 0</span></div>
<div class="a" style="left:66px;top:668px;width:244px;height:85px;border:2px solid #e60012"></div>
<svg class="a" style="left:11.5px;top:650.5px" width="13" height="15" viewBox="0 0 13 15"><path d="M0.5 0.2L12.4 7.3L0.5 14.6Z" fill="#59a869"/></svg>
<div class="a" style="left:11px;top:684px;width:12px;height:12px;background:#c2c2c2"></div>
<svg class="a" style="left:46px;top:651px" width="14" height="16" viewBox="0 0 14 16"><path d="M7 1.5V15.5M1.5 7L7 1.5L12.5 7" fill="none" stroke="#c4c4c4" stroke-width="1.7"/></svg>
<svg class="a" style="left:46px;top:684px" width="14" height="16" viewBox="0 0 14 16"><path d="M7 0.5V14.5M1.5 9L7 14.5L12.5 9" fill="none" stroke="#c4c4c4" stroke-width="1.7"/></svg>
<svg class="a" style="left:8px;top:715px" width="18" height="16" viewBox="0 0 18 16"><path d="M0 3H5L6 0.5H12L13 3H18V15H0Z" fill="#c4c4c4"/><circle cx="9" cy="8.8" r="3.3" fill="#f2f2f2"/><circle cx="9" cy="8.8" r="1.8" fill="#c4c4c4"/></svg>
<svg class="a" style="left:4px;top:742px" width="28" height="28" viewBox="0 0 28 28"><g fill="#c6c6c6" stroke="#c6c6c6"><path d="M9.4 5L13 8.4M16.6 5L13 8.4" stroke-width="1.6" fill="none"/><path d="M8.2 10.6C8.6 8.6 10.6 7.6 13 7.6C15.4 7.6 17.4 8.6 17.8 10.6Z" stroke="none"/><path d="M5.5 10.8H20.3" stroke-width="1.9" fill="none"/><path d="M8 10.5H17.8V13.5H12.6V21.2C10 21.2 8 19 8 16Z" stroke="none"/><path d="M5.5 14.6H12.6M5.5 18.7H12.6" stroke-width="1.9" fill="none"/></g><path d="M14.8 21.6L22 14.4" stroke="#f2f2f2" stroke-width="5"/><path d="M15.6 22.2L21.6 16.2" stroke="#c6c6c6" stroke-width="2.2"/><path d="M15.8 14H22.8V21Z" fill="#c6c6c6"/></svg>
<svg class="a" style="left:8px;top:778px" width="18" height="19" viewBox="0 0 18 19"><path d="M3.5 5V1H17V18H3.5V14" fill="none" stroke="#c4c4c4" stroke-width="1.7"/><path d="M0 9.5H10M6.5 5.5L10.5 9.5L6.5 13.5" fill="none" stroke="#c4c4c4" stroke-width="1.8"/></svg>
<svg class="a" style="left:44.5px;top:715.5px" width="18" height="18" viewBox="0 0 18 18"><path d="M1 1.5H15M1 7H12.5A3.3 3.3 0 0 1 12.5 13.6H8.5" fill="none" stroke="#6e6e6e" stroke-width="1.6"/><path d="M1 13H3.5" stroke="#6e6e6e" stroke-width="1.6"/><path d="M10.5 10.6L7.5 13.6L10.5 16.6" fill="none" stroke="#6e6e6e" stroke-width="1.6"/></svg>
<div class="a" style="left:39px;top:742.5px;width:28px;height:27.7px;background:#d6d6d6;border-radius:4px"></div>
<svg class="a" style="left:44.5px;top:747.5px" width="17" height="16" viewBox="0 0 17 16"><g fill="#6e6e6e"><rect x="0" y="3.3" width="4" height="1.6"/><rect x="0" y="7.6" width="4" height="1.6"/><rect x="0" y="12.7" width="16" height="1.6"/></g><path d="M11.2 0.5V10M7.3 6.3L11.2 10.2L15.1 6.3" fill="none" stroke="#6e6e6e" stroke-width="1.7"/></svg>
<svg class="a" style="left:43.5px;top:781px" width="19" height="17" viewBox="0 0 19 17"><rect x="4" y="0" width="11" height="3" fill="#6e6e6e"/><rect x="0" y="5" width="19" height="7" rx="0.8" fill="#6e6e6e"/><rect x="4" y="9.8" width="11" height="6.4" fill="#fff" stroke="#6e6e6e" stroke-width="1.4"/><rect x="15" y="6" width="2" height="1.2" fill="#fff"/></svg>
</body></html>
